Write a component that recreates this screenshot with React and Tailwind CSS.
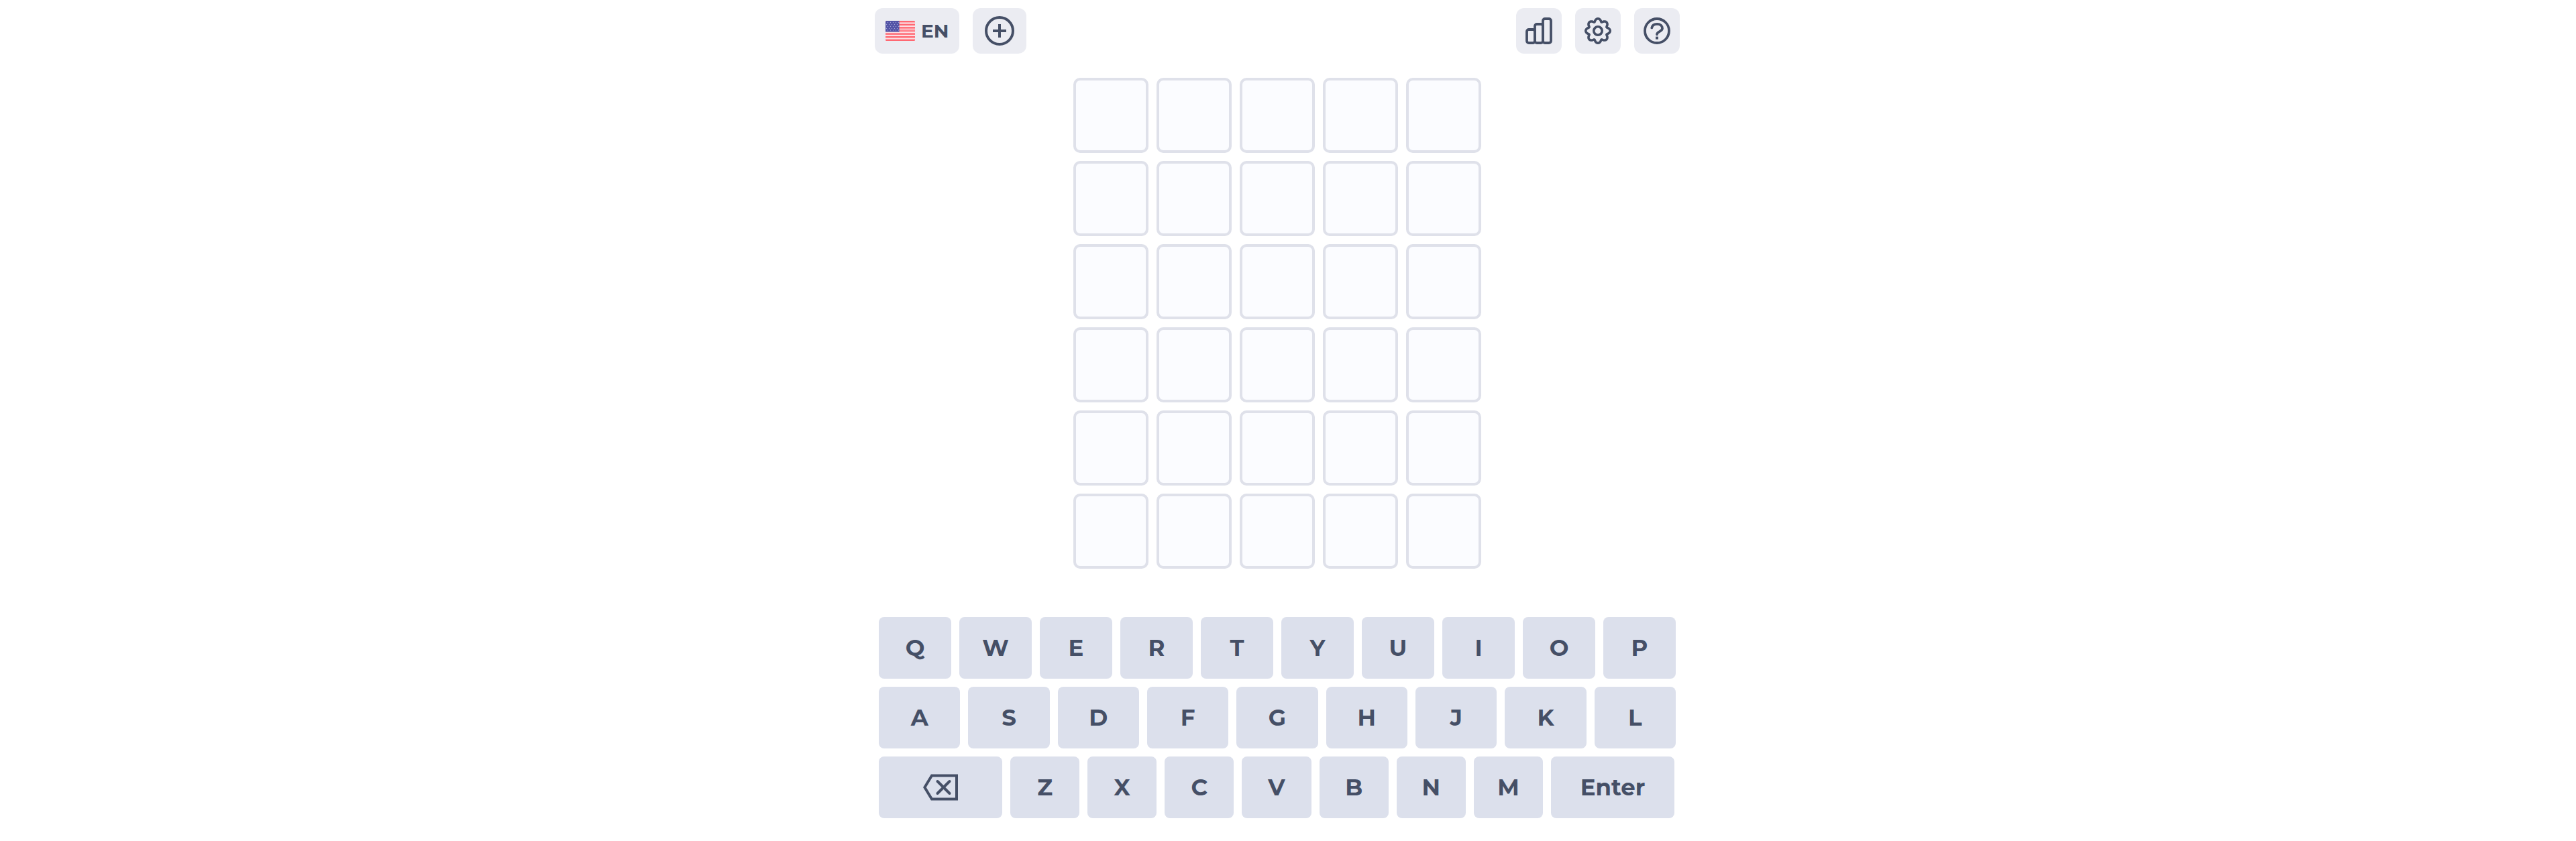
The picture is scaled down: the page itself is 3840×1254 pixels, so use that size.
import React from "react";

const ROWS = [
  ["Q", "W", "E", "R", "T", "Y", "U", "I", "O", "P"],
  ["A", "S", "D", "F", "G", "H", "J", "K", "L"],
  ["Z", "X", "C", "V", "B", "N", "M"],
];

// Outline of the eight-toothed gear, sampled around its centre.
const GEAR_PATH =
  Array.from({ length: 144 }, (_, i) => {
    const t = (i / 144) * Math.PI * 2;
    const angle = t + 0.05 * Math.sin(8 * t);
    const radius = 16.1 + 2.1 * Math.cos(8 * t);
    const x = (20 + radius * Math.sin(angle)).toFixed(2);
    const y = (20 - radius * Math.cos(angle)).toFixed(2);
    return `${i === 0 ? "M" : "L"}${x} ${y}`;
  }).join("") + "Z";

function FlagUS() {
  return (
    <svg viewBox="0 0 44 30" className="h-[30px] w-11" aria-hidden="true">
      <defs>
        <clipPath id="flag-shape">
          <rect width="44" height="30" rx="1.5" />
        </clipPath>
      </defs>
      <g clipPath="url(#flag-shape)">
        <rect width="44" height="30" fill="#fbdfe4" />
        {[0, 4.6, 9.2, 13.8, 18.4, 23, 27.6].map((y) => (
          <rect key={y} y={y} width="44" height="2.4" fill="#ff6872" />
        ))}
        <rect x="20" y="11" width="24" height="5.5" fill="#ff9aa3" opacity="0.6" />
        <rect width="20.5" height="16.5" fill="#5153a6" />
        {[2.5, 5.5, 8.5, 11.5, 14].map((y, r) =>
          [3, 7, 11, 15, 19].map((x) => (
            <circle key={`${x}-${y}`} cx={x - (r % 2) * 2 + 0.5} cy={y} r="0.7" fill="#9fa0d2" />
          ))
        )}
      </g>
    </svg>
  );
}

function PlusIcon() {
  return (
    <svg viewBox="0 0 44 44" className="size-11" fill="none" stroke="currentColor" strokeWidth="4" aria-hidden="true">
      <circle cx="22" cy="22" r="20" />
      <path d="M22 12v20M12 22h20" />
    </svg>
  );
}

function StatsIcon() {
  return (
    <svg viewBox="0 0 40 40" className="size-10" fill="none" stroke="currentColor" strokeWidth="3.8" aria-hidden="true">
      <rect x="2" y="18" width="12" height="20" rx="3" />
      <rect x="14" y="10" width="12" height="28" rx="3" />
      <rect x="26" y="2" width="12" height="36" rx="3" />
    </svg>
  );
}

function GearIcon() {
  return (
    <svg viewBox="0 0 40 40" className="size-10" fill="none" stroke="currentColor" strokeWidth="3.6" strokeLinejoin="round" aria-hidden="true">
      <path d={GEAR_PATH} />
      <circle cx="20" cy="20" r="6.2" />
    </svg>
  );
}

function HelpIcon() {
  return (
    <svg viewBox="0 0 40 40" className="size-10" fill="none" stroke="currentColor" strokeWidth="3.8" aria-hidden="true">
      <circle cx="20" cy="20" r="18" />
      <path d="M12.3 15.5C13 11.8 16.2 9.8 20.2 9.8c4.8 0 7.8 2.8 7.8 6.5 0 5-8 4.7-8 9" strokeLinecap="round" />
      <rect x="18" y="28.6" width="4" height="4" fill="currentColor" stroke="none" />
    </svg>
  );
}

function BackspaceIcon() {
  return (
    <svg viewBox="0 0 52 40" className="h-10 w-[52px]" fill="none" stroke="currentColor" strokeWidth="4" aria-hidden="true">
      <path d="M13 2.500H50V37.500H13L2.400 20Z" />
      <path d="M21.500 11 39.500 29M39.500 11 21.500 29" strokeLinecap="round" />
    </svg>
  );
}

function HeaderButton({ label, className = "w-[68px]", children }) {
  return (
    <button
      type="button"
      aria-label={label}
      className={`flex h-[68px] items-center justify-center rounded-xl bg-[#ebecf2] ${className}`}
    >
      {children}
    </button>
  );
}

function Key({ label, className = "flex-1", children }) {
  return (
    <button
      type="button"
      aria-label={label}
      className={`flex h-[92px] items-center justify-center rounded-lg bg-[#dce0ec] ${className}`}
    >
      {children}
    </button>
  );
}

export default function App() {
  return (
    <div className="min-h-screen bg-white pr-8 font-['Montserrat','Inter',sans-serif] font-bold text-[#454f66]">
      <div className="mx-auto w-full max-w-[1200px] pt-3">
        <header className="flex justify-between">
          <div className="flex gap-5">
            <HeaderButton label="Language: EN" className="gap-[9px] px-4">
              <FlagUS />
              <span className="text-[28px] leading-9">EN</span>
            </HeaderButton>
            <HeaderButton label="New game" className="w-20">
              <PlusIcon />
            </HeaderButton>
          </div>
          <nav className="flex gap-5">
            <HeaderButton label="Statistics">
              <StatsIcon />
            </HeaderButton>
            <HeaderButton label="Settings">
              <GearIcon />
            </HeaderButton>
            <HeaderButton label="Help">
              <HelpIcon />
            </HeaderButton>
          </nav>
        </header>

        <main>
          <div className="mx-auto mt-9 grid w-fit grid-cols-5 gap-3">
            {Array.from({ length: 30 }, (_, i) => (
              <div key={i} className="size-28 rounded-[10px] border-4 border-[#dfe1ea] bg-[#fbfcff]" />
            ))}
          </div>

          <div className="mt-[72px] flex flex-col gap-3 px-1.5 text-[34px] leading-10">
            {ROWS.slice(0, 2).map((row) => (
              <div key={row[0]} className="flex gap-3">
                {row.map((k) => (
                  <Key key={k}>{k}</Key>
                ))}
              </div>
            ))}
            <div className="flex gap-3 pr-0.5">
              <Key label="Backspace" className="w-[184px]">
                <BackspaceIcon />
              </Key>
              {ROWS[2].map((k) => (
                <Key key={k}>{k}</Key>
              ))}
              <Key className="w-[184px]">Enter</Key>
            </div>
          </div>
        </main>
      </div>
    </div>
  );
}
